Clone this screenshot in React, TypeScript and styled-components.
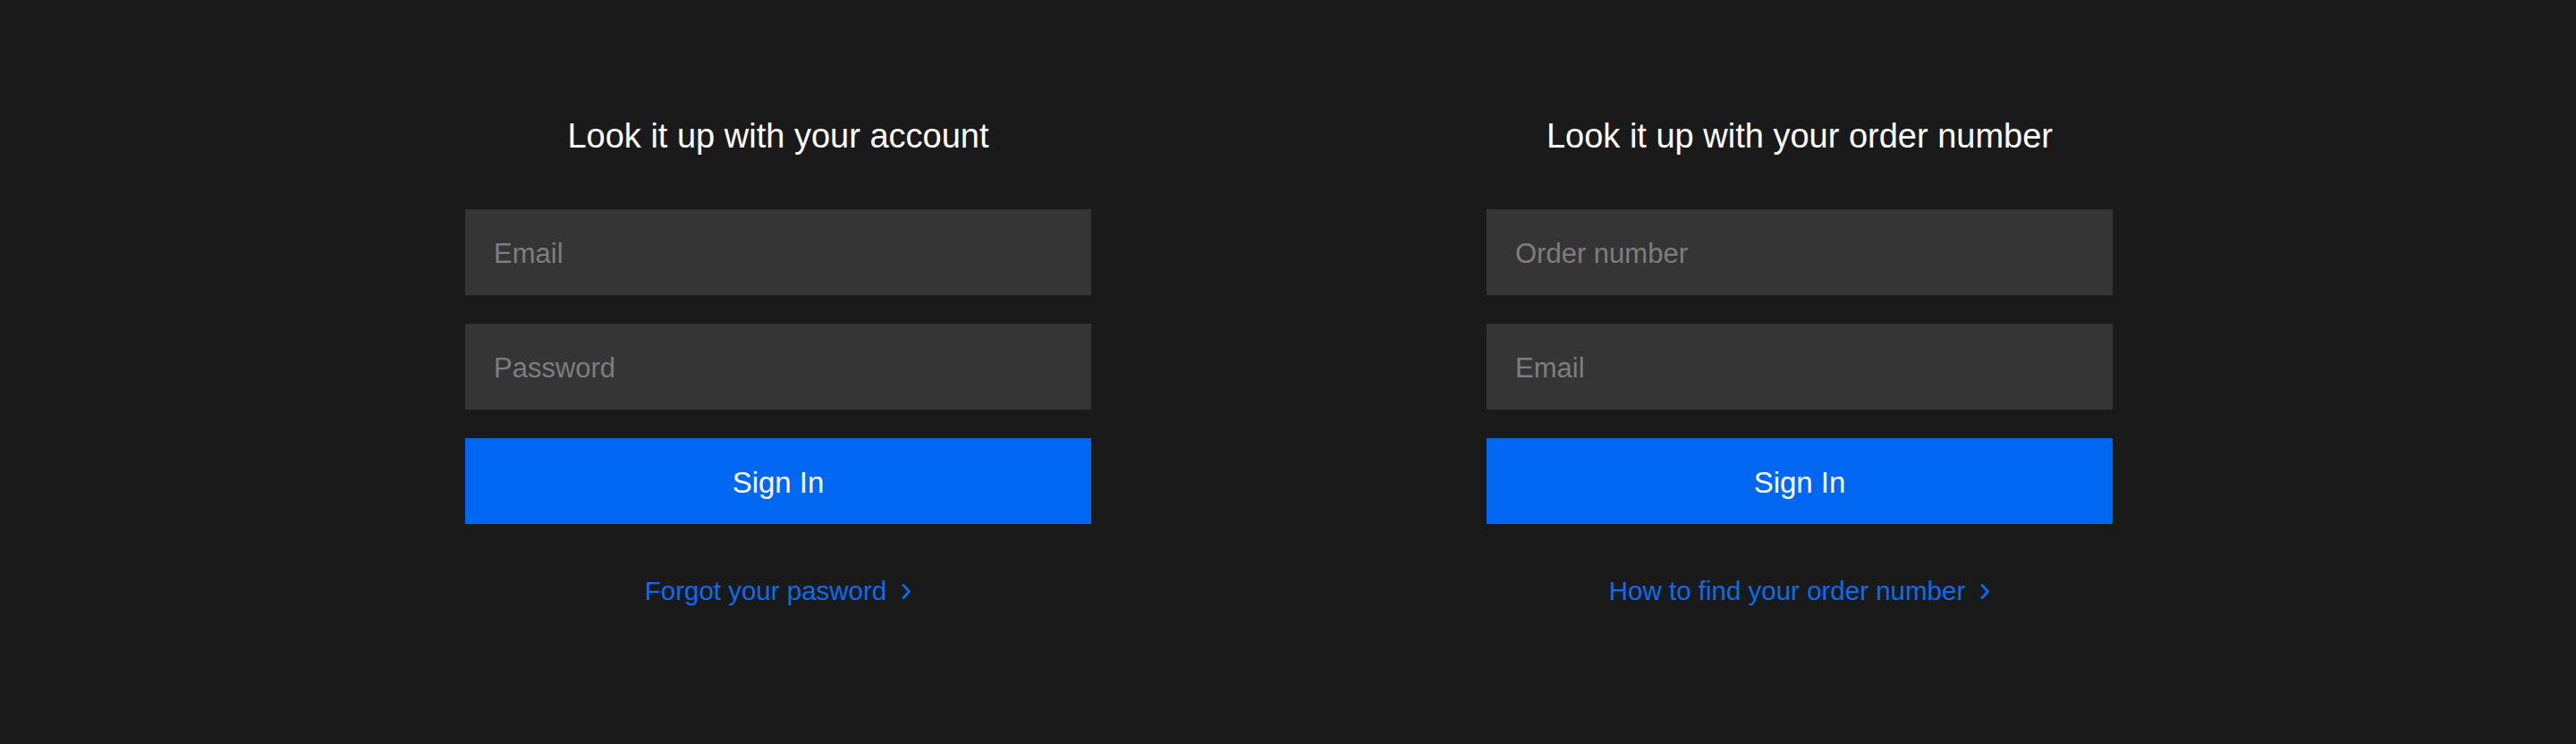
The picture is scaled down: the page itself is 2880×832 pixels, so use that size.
import React from 'react';
import styled, { createGlobalStyle } from 'styled-components';

const GlobalStyle = createGlobalStyle`
  html, body {
    margin: 0;
    padding: 0;
    background-color: #1a1a1a;
  }
  * {
    box-sizing: border-box;
  }
`;

const Page = styled.div`
  display: flex;
  justify-content: center;
  gap: 442px;
  min-height: 100vh;
  padding: 130px 0 0 2px;
  background-color: #1a1a1a;
  font-family: "Liberation Sans", Arial, sans-serif;
`;

const Column = styled.section`
  display: flex;
  flex-direction: column;
  align-items: center;
  width: 700px;
`;

const Title = styled.h2`
  margin: 0 0 60px;
  font-size: 38px;
  line-height: 44px;
  font-weight: 400;
  color: #ffffff;
`;

const Form = styled.form`
  display: flex;
  flex-direction: column;
  gap: 32px;
  width: 100%;
`;

const Input = styled.input`
  width: 100%;
  height: 96px;
  padding: 3px 32px 0;
  border: none;
  border-radius: 0;
  background-color: #353535;
  color: #ffffff;
  font-family: inherit;
  font-size: 31px;
  &::placeholder {
    color: #7d7d7d;
  }
  &:focus {
    outline: none;
  }
`;

const Button = styled.button`
  width: 100%;
  height: 96px;
  padding: 3px 0 0;
  border: none;
  border-radius: 0;
  background-color: #0067f2;
  color: #ffffff;
  font-family: inherit;
  font-size: 33px;
  cursor: pointer;
`;

const HelpLink = styled.a`
  display: inline-flex;
  align-items: center;
  gap: 17px;
  margin-top: 58px;
  font-size: 29.5px;
  line-height: 34px;
  color: #0a6cf0;
  text-decoration: none;
  cursor: pointer;
`;

const Chevron = () => (
  <svg width="11" height="17" viewBox="0 0 11 17" fill="none">
    <path d="M2 1.5L8.5 8.5L2 15.5" stroke="#0a6cf0" strokeWidth="2.8" strokeLinecap="round" strokeLinejoin="round" />
  </svg>
);

type Field = { name: string; placeholder: string; type: string };

const LookupCard: React.FC<{ title: string; fields: Field[]; link: string }> = ({ title, fields, link }) => (
  <Column>
    <Title>{title}</Title>
    <Form onSubmit={(e) => e.preventDefault()}>
      {fields.map((f) => (
        <Input key={f.name} name={f.name} type={f.type} placeholder={f.placeholder} />
      ))}
      <Button type="submit">Sign In</Button>
    </Form>
    <HelpLink href="#">
      {link}
      <Chevron />
    </HelpLink>
  </Column>
);

const App: React.FC = () => (
  <>
    <GlobalStyle />
    <Page>
      <LookupCard
        title="Look it up with your account"
        fields={[
          { name: 'email', placeholder: 'Email', type: 'email' },
          { name: 'password', placeholder: 'Password', type: 'password' },
        ]}
        link="Forgot your pasword"
      />
      <LookupCard
        title="Look it up with your order number"
        fields={[
          { name: 'order', placeholder: 'Order number', type: 'text' },
          { name: 'email', placeholder: 'Email', type: 'email' },
        ]}
        link="How to find your order number"
      />
    </Page>
  </>
);

export default App;
